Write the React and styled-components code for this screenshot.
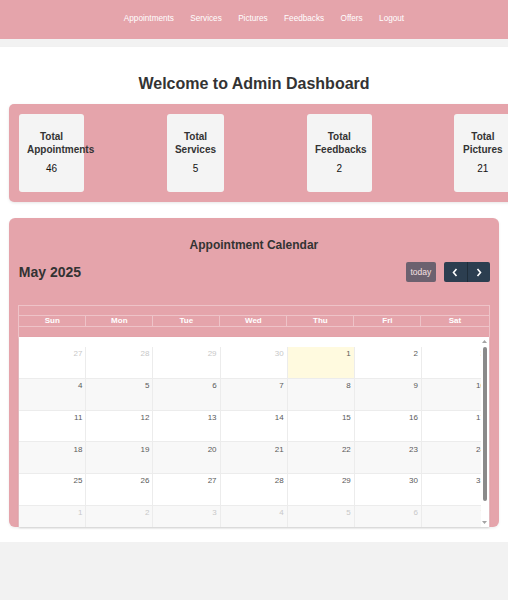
import React from 'react';
import styled, { createGlobalStyle } from 'styled-components';

const PINK = '#e5a4ab';

const Global = createGlobalStyle`
  html, body { margin: 0; padding: 0; }
  body {
    background: #f2f2f2;
    font-family: "Liberation Sans", Arial, sans-serif;
    color: #333;
  }
`;

const Nav = styled.nav`
  height: 39px;
  background: ${PINK};
  display: flex;
  align-items: center;
  justify-content: center;
  box-sizing: border-box;
  padding-bottom: 1px;
`;

const NavList = styled.ul`
  list-style: none;
  margin: 0;
  padding: 0 0 0 20px;
  display: flex;
  gap: 16.4px;
  font-size: 8.2px;
  line-height: 10px;
`;

const NavItem = styled.li`
  display: block;
`;

const NavLink = styled.a`
  color: #fff;
  text-decoration: none;
`;

const Main = styled.main`
  margin-top: 7.7px;
  background: #fff;
  padding: 28px 9px 17px;
  overflow: hidden;
  box-shadow: 0 1px 2px rgba(0, 0, 0, 0.08);
`;

const Heading = styled.h1`
  margin: 0 0 11.2px;
  font-size: 16px;
  line-height: 18.4px;
  font-weight: bold;
  text-align: center;
  color: #333;
`;

const StatsPanel = styled.section`
  box-sizing: content-box;
  width: 100%;
  padding: 10px;
  background: ${PINK};
  border-radius: 5px;
  display: flex;
  gap: 82.7px;
  box-shadow: 0 1px 3px rgba(0, 0, 0, 0.1);
`;

const StatCard = styled.div`
  flex-shrink: 0;
  box-sizing: content-box;
  width: ${(p) => p.$w}px;
  padding: 17px 8px;
  background: #f4f4f4;
  border-radius: 3px;
  text-align: center;
`;

const StatTitle = styled.h3`
  margin: 0 0 7px;
  font-size: 10px;
  line-height: 12.4px;
  font-weight: bold;
  color: #333;
`;

const StatValue = styled.p`
  margin: 0;
  font-size: 10px;
  line-height: 12px;
  color: #111;
`;

const CalendarPanel = styled.section`
  margin-top: 16.3px;
  background: ${PINK};
  border-radius: 6px;
  padding: 10px 9.5px 0 9.3px;
  box-shadow: 0 1px 3px rgba(0, 0, 0, 0.08);
`;

const CalendarTitle = styled.h2`
  margin: 9.6px 0 10.4px;
  font-size: 12px;
  line-height: 14px;
  font-weight: bold;
  text-align: center;
  color: #333;
`;

const Toolbar = styled.div`
  display: flex;
  justify-content: space-between;
  align-items: center;
  height: 19.6px;
  margin-bottom: 22.8px;
`;

const MonthTitle = styled.h2`
  margin: 0;
  padding-left: 0.5px;
  font-size: 14px;
  line-height: 16px;
  font-weight: bold;
  color: #333;
`;

const ButtonRow = styled.div`
  display: flex;
  align-items: center;
  gap: 7.6px;
`;

const TodayButton = styled.button`
  width: 30px;
  height: 19.6px;
  padding: 0;
  border: none;
  border-radius: 2px;
  background: #2c3e50;
  opacity: 0.65;
  color: #fff;
  font-family: inherit;
  font-size: 8.5px;
`;

const ButtonGroup = styled.div`
  display: flex;
  border-radius: 2px;
  overflow: hidden;
`;

const NavButton = styled.button`
  width: 23px;
  height: 19.6px;
  padding: 0;
  border: none;
  border-left: ${(p) => (p.$divider ? '1px solid #1f2d3a' : 'none')};
  background: #2c3e50;
  display: flex;
  align-items: center;
  justify-content: center;
`;

const Grid = styled.div`
  border: 1px solid rgba(255, 255, 255, 0.35);
  border-bottom: none;
  margin-bottom: -2px;
`;

const HeaderBand = styled.div`
  padding: 9px 0 10px;
`;

const HeaderRow = styled.div`
  display: grid;
  grid-template-columns: repeat(7, 1fr);
  border-top: 1px solid rgba(255, 255, 255, 0.35);
  border-bottom: 1px solid rgba(255, 255, 255, 0.35);
`;

const HeaderCell = styled.div`
  text-align: center;
  color: #fff;
  font-size: 8px;
  line-height: 10.4px;
  font-weight: bold;
  border-right: ${(p) => (p.$last ? 'none' : '1px solid rgba(255, 255, 255, 0.35)')};
`;

const Body = styled.div`
  display: flex;
  height: 190.3px;
  background: #fff;
  box-shadow: 0 1px 2px rgba(0, 0, 0, 0.15);
`;

const ClipArea = styled.div`
  flex: 1;
  min-width: 0;
  overflow: hidden;
  padding-top: 10px;
`;

const Weeks = styled.div`
  width: 469.7px;
`;

const WeekRow = styled.div`
  display: grid;
  grid-template-columns: repeat(7, 1fr);
  height: 31.7px;
  background: ${(p) => (p.$striped ? '#f8f8f8' : '#fff')};
`;

const DayCell = styled.div`
  box-sizing: border-box;
  border-right: 1px solid #ececec;
  border-bottom: 1px solid #ececec;
  padding: 2.3px 3px 0;
  text-align: right;
  font-size: 8px;
  line-height: 10px;
  color: ${(p) => (p.$other ? '#c8c8c8' : '#5a5a5a')};
  background: ${(p) => (p.$today ? 'rgba(255, 220, 40, 0.15)' : 'transparent')};
`;

const Scrollbar = styled.div`
  width: 7.3px;
  flex-shrink: 0;
  display: flex;
  flex-direction: column;
  align-items: center;
  padding: 2.8px 0 3px;
  box-sizing: border-box;
  background: #fff;
`;

const Thumb = styled.div`
  width: 4px;
  height: 154.3px;
  margin-top: 4.2px;
  border-radius: 2px;
  background: #8a8a8a;
`;

const Spacer = styled.div`
  flex: 1;
`;

const Arrow = ({ down }) => (
  <svg width="5" height="3" viewBox="0 0 5 3">
    <polygon points={down ? '0,0 5,0 2.5,3' : '0,3 5,3 2.5,0'} fill="#a3a3a3" />
  </svg>
);

const Chevron = ({ right }) => (
  <svg width="6" height="9" viewBox="0 0 6 9">
    <polyline
      points={right ? '1.5,1 4.5,4.5 1.5,8' : '4.5,1 1.5,4.5 4.5,8'}
      fill="none"
      stroke="#fff"
      strokeWidth="1.6"
    />
  </svg>
);

const navItems = ['Appointments', 'Services', 'Pictures', 'Feedbacks', 'Offers', 'Logout'];

const stats = [
  { label: 'Total Appointments', value: 46, w: 49 },
  { label: 'Total Services', value: 5, w: 41.6 },
  { label: 'Total Feedbacks', value: 2, w: 48.7 },
  { label: 'Total Pictures', value: 21, w: 41 },
];

const dayNames = ['Sun', 'Mon', 'Tue', 'Wed', 'Thu', 'Fri', 'Sat'];

const weeks = [
  [[27, 1], [28, 1], [29, 1], [30, 1], [1, 0, 1], [2, 0], [3, 0]],
  [[4], [5], [6], [7], [8], [9], [10]],
  [[11], [12], [13], [14], [15], [16], [17]],
  [[18], [19], [20], [21], [22], [23], [24]],
  [[25], [26], [27], [28], [29], [30], [31]],
  [[1, 1], [2, 1], [3, 1], [4, 1], [5, 1], [6, 1], [7, 1]],
];

export default function App() {
  return (
    <>
      <Global />
      <Nav>
        <NavList>
          {navItems.map((n) => (
            <NavItem key={n}>
              <NavLink href="#">{n}</NavLink>
            </NavItem>
          ))}
        </NavList>
      </Nav>
      <Main>
        <Heading>Welcome to Admin Dashboard</Heading>
        <StatsPanel>
          {stats.map((s) => (
            <StatCard key={s.label} $w={s.w}>
              <StatTitle>{s.label}</StatTitle>
              <StatValue>{s.value}</StatValue>
            </StatCard>
          ))}
        </StatsPanel>
        <CalendarPanel>
          <CalendarTitle>Appointment Calendar</CalendarTitle>
          <Toolbar>
            <MonthTitle>May 2025</MonthTitle>
            <ButtonRow>
              <TodayButton>today</TodayButton>
              <ButtonGroup>
                <NavButton aria-label="prev">
                  <Chevron />
                </NavButton>
                <NavButton aria-label="next" $divider>
                  <Chevron right />
                </NavButton>
              </ButtonGroup>
            </ButtonRow>
          </Toolbar>
          <Grid>
            <HeaderBand>
              <HeaderRow>
                {dayNames.map((d, i) => (
                  <HeaderCell key={d} $last={i === 6}>
                    {d}
                  </HeaderCell>
                ))}
              </HeaderRow>
            </HeaderBand>
            <Body>
              <ClipArea>
                <Weeks>
                  {weeks.map((w, wi) => (
                    <WeekRow key={wi} $striped={wi % 2 === 1}>
                      {w.map(([d, other, today], di) => (
                        <DayCell key={di} $other={!!other} $today={!!today}>
                          {d}
                        </DayCell>
                      ))}
                    </WeekRow>
                  ))}
                </Weeks>
              </ClipArea>
              <Scrollbar>
                <Arrow />
                <Thumb />
                <Spacer />
                <Arrow down />
              </Scrollbar>
            </Body>
          </Grid>
        </CalendarPanel>
      </Main>
    </>
  );
}
